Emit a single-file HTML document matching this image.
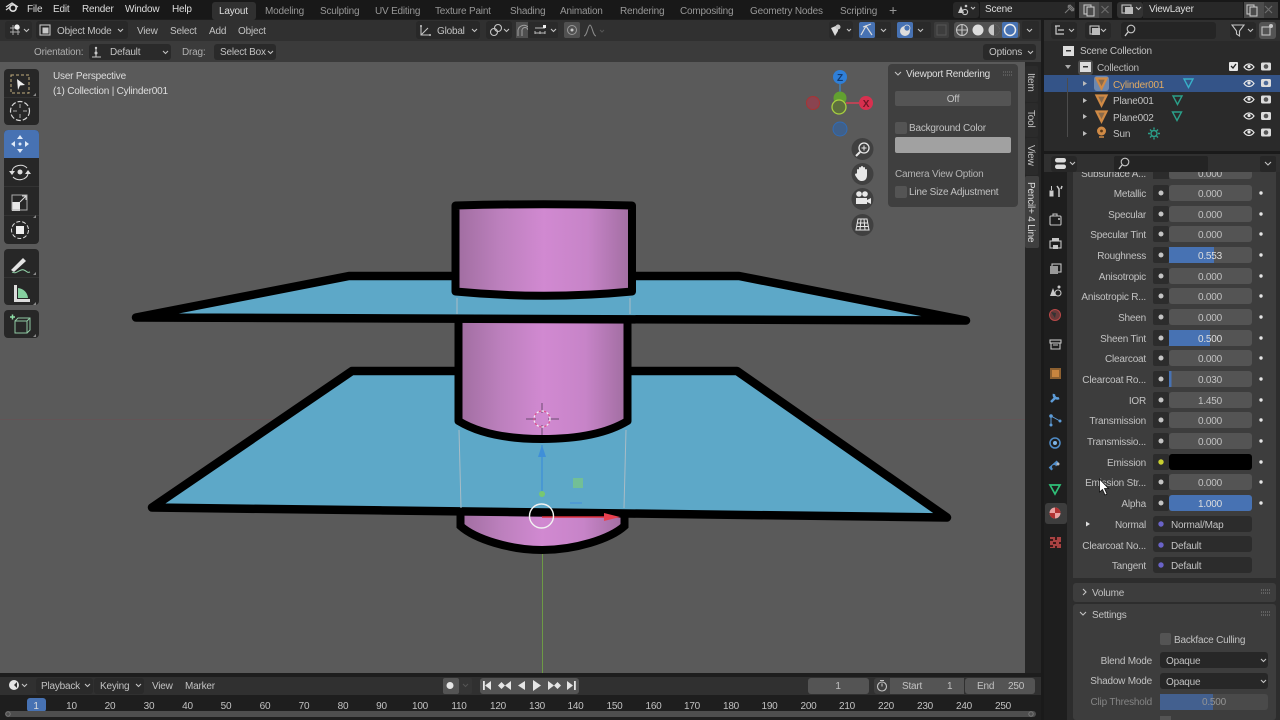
<!DOCTYPE html>
<html lang="en"><head><meta charset="utf-8"><title>Blender</title>
<style>
html,body{margin:0;padding:0;background:#1d1d1d;width:1280px;height:720px;overflow:hidden}
svg{display:block;filter:blur(.35px)}
text{font-family:"Liberation Sans",sans-serif;font-size:10px;letter-spacing:-.2px;fill:#c2c2c2}
.l{text-anchor:end}
.c{text-anchor:middle}
.d{fill:#979797}
.w{fill:#dedede}
.i{fill:none;stroke:#c4c4c4;stroke-width:1.1}
.f{fill:#c8c8c8}
</style></head><body>
<svg width="1280" height="720" viewBox="0 0 1280 720" xmlns="http://www.w3.org/2000/svg">
<defs>
<linearGradient id="p1" x1="0" x2="1" y1="0" y2="0"><stop offset="0" stop-color="#a06da0"/><stop offset=".25" stop-color="#bc80bd"/><stop offset=".5" stop-color="#d189d1"/><stop offset=".75" stop-color="#c784c8"/><stop offset="1" stop-color="#a06da0"/></linearGradient>
</defs>
<rect width="1280" height="720" fill="#1d1d1d"/>

<!-- top bar -->
<rect width="1280" height="19" fill="#181818"/>
<rect x="212" y="2" width="44" height="18" rx="3" fill="#303030"/>
<g transform="translate(12,8)"><circle cx="1" cy="0" r="3.2" fill="none" stroke="#ddd" stroke-width="1.6"/><path d="M-6,-1L0,-5L6,-1M-6,2L-2,-1" fill="none" stroke="#ddd" stroke-width="1.3"/></g>
<text x="27" y="12" class="w">File</text><text x="53" y="12" class="w">Edit</text><text x="82" y="12" class="w">Render</text><text x="125" y="12" class="w">Window</text><text x="172" y="12" class="w">Help</text>
<text x="219" y="14" class="w">Layout</text>
<text x="265" y="14" class="d">Modeling</text><text x="320" y="14" class="d">Sculpting</text><text x="375" y="14" class="d">UV Editing</text><text x="435" y="14" class="d">Texture Paint</text><text x="510" y="14" class="d">Shading</text><text x="560" y="14" class="d">Animation</text><text x="620" y="14" class="d">Rendering</text><text x="680" y="14" class="d">Compositing</text><text x="750" y="14" class="d">Geometry Nodes</text><text x="840" y="14" class="d">Scripting</text>
<text x="889" y="15" style="font-size:14px" class="d">+</text>
<rect x="953" y="2" width="26" height="16" rx="3" fill="#282828"/>
<path d="M958,13L961,6L964,13Z" fill="#ccc"/><circle cx="965" cy="12" r="2.6" class="i"/><circle cx="966" cy="6" r="1.3" class="f"/><path d="M971,7l2,2l2,-2" class="i"/>
<rect x="980" y="2" width="95" height="16" fill="#282828"/>
<text x="985" y="12" class="w">Scene</text>
<path d="M1065,13l4,-4m-1,-4l6,6m-4,-6l-2,2l4,4l2,-2z" style="fill:none;stroke:#7a7a7a;stroke-width:1.1"/>
<rect x="1079" y="2" width="20" height="16" fill="#4c4c4c"/><rect x="1084" y="5" width="7" height="9" class="i"/><rect x="1087" y="7" width="7" height="9" fill="#4c4c4c" stroke="#cfcfcf"/>
<rect x="1099" y="2" width="13" height="16" fill="#3a3a3a"/><path d="M1101.5,6l7,7m0,-7l-7,7" fill="none" stroke="#6d6d6d" stroke-width="1.2"/>
<rect x="1117" y="2" width="26" height="16" rx="3" fill="#333"/><rect x="1122" y="5" width="9" height="8" class="i"/><rect x="1125" y="7" width="8" height="7" fill="#bbb"/><path d="M1136,7l2.500,2.500l2.500,-2.500" class="i"/>
<rect x="1143" y="2" width="100" height="16" fill="#282828"/>
<text x="1149" y="12" class="w">ViewLayer</text>
<rect x="1244" y="2" width="20" height="16" fill="#4c4c4c"/><rect x="1247" y="5" width="7" height="9" class="i"/><rect x="1250" y="7" width="7" height="9" fill="#4c4c4c" stroke="#cfcfcf"/>
<rect x="1264" y="2" width="14" height="16" fill="#3a3a3a"/><path d="M1265,6l7,7m0,-7l-7,7" fill="none" stroke="#6d6d6d" stroke-width="1.2"/>

<!-- 3D view header -->
<rect x="0" y="20" width="1041" height="21" fill="#303030"/>
<rect x="0" y="41" width="1041" height="21" fill="#3b3b3b"/>
<rect x="5" y="21" width="27" height="18" rx="3" fill="#2a2a2a"/>
<path d="M10,32h10M10,28h10M13,25v10M18,25v10" fill="none" stroke="#aaa"/><circle cx="17" cy="27" r="2.600" fill="#eee"/><path d="M24,29l2.500,2.500l2.500,-2.500" class="i"/>
<rect x="36" y="21" width="92" height="18" rx="3" fill="#282828"/>
<rect x="40" y="25" width="10" height="10" class="i"/><rect x="42.500" y="27.500" width="6" height="6" class="f"/>
<text x="57" y="34">Object Mode</text><path d="M118,29l2.500,2.500l2.500,-2.500" class="i"/>
<text x="137" y="34">View</text><text x="170" y="34">Select</text><text x="209" y="34">Add</text><text x="238" y="34">Object</text>
<rect x="416" y="21" width="64" height="18" rx="3" fill="#282828"/>
<path d="M421,26v9h9M421,35l7,-7" class="i"/><circle cx="421" cy="26" r="1" class="f"/><circle cx="430" cy="35" r="1" class="f"/>
<text x="437" y="34">Global</text><path d="M472,29l2.500,2.500l2.500,-2.500" class="i"/>
<rect x="486" y="21" width="26" height="18" rx="3" fill="#282828"/>
<circle cx="494" cy="32" r="3.500" class="i"/><circle cx="498" cy="28" r="3.500" class="i"/><path d="M504,29l2.500,2.500l2.500,-2.500" class="i"/>
<rect x="516" y="22" width="12" height="16" fill="#505050"/>
<path d="M518,36v-6a6,6 0 0 1 10,-3M522,36v-5a3,3 0 0 1 6,-1" fill="none" stroke="#9f9f9f"/>
<rect x="528" y="22" width="30" height="16" rx="2" fill="#2a2a2a"/>
<path d="M535,28h10M535,34v-3M540,34v-3M545,34v-3M535,33h10" fill="none" stroke="#bbb"/><rect x="543" y="25" width="3" height="3" fill="#eee"/><path d="M551,29l2.500,2.500l2.500,-2.500" class="i"/>
<rect x="564" y="22" width="16" height="16" rx="2" fill="#505050"/><circle cx="572" cy="30" r="4.500" style="fill:none;stroke:#999"/><circle cx="572" cy="30" r="1.500" class="f"/>
<path d="M584,36c3,0 4,-11 6,-11s3,11 6,11" fill="none" stroke="#8c8c8c"/><path d="M600,30l2,2l2,-2" fill="none" stroke="#555"/>
<rect x="829" y="21" width="24" height="18" rx="3" fill="#2a2a2a"/><path d="M831,28l7,-3v6l-3,5z" fill="#ddd"/><circle cx="838" cy="27" r="2.500" class="f"/><path d="M847,29l2,2l2,-2" class="i"/>
<rect x="859" y="22" width="16" height="16" rx="2" fill="#4772b3"/><path d="M861,35l5,-9l6,9M863,27l8,-3" fill="none" stroke="#ddd" stroke-width="1.200"/>
<rect x="875" y="22" width="16" height="16" rx="2" fill="#2a2a2a"/><path d="M881,29l2.500,2.500l2.500,-2.500" class="i"/>
<rect x="897" y="22" width="16" height="16" rx="2" fill="#4772b3"/><circle cx="905" cy="31" r="5" fill="#ddd"/><circle cx="907" cy="28" r="3" fill="#4772b3" stroke="#ddd" stroke-width=".8"/>
<rect x="913" y="22" width="18" height="16" rx="2" fill="#2a2a2a"/><path d="M918,29l2.500,2.500l2.500,-2.500" class="i"/>
<rect x="934" y="22" width="15" height="16" rx="2" fill="#3d3d3d"/><rect x="937" y="25" width="9" height="10" fill="none" stroke="#555"/>
<rect x="954" y="22" width="66" height="16" rx="3" fill="#515151"/>
<circle cx="962" cy="30" r="5.500" class="i"/><path d="M957,30h10M962,25v10" class="i"/>
<circle cx="978" cy="30" r="5.500" fill="#dcdcdc"/>
<circle cx="994" cy="30" r="5.500" class="f"/><path d="M994,24.500a5.500,5.500 0 0 1 0,11z" fill="#515151"/>
<rect x="1002" y="22" width="16" height="16" rx="2" fill="#4772b3"/><circle cx="1010" cy="30" r="5.500" fill="none" stroke="#eee" stroke-width="1.500"/>
<rect x="1022" y="21" width="17" height="18" rx="2" fill="#2a2a2a"/><path d="M1027,29l2.500,2.500l2.500,-2.500" class="i"/>

<!-- tool header -->
<text x="34" y="55" style="fill:#aeaeae">Orientation:</text>
<rect x="89" y="44" width="82" height="16" rx="3" fill="#2a2a2a"/>
<path d="M96,49v8M92,57h9" class="i"/><circle cx="96" cy="48" r="1.200" class="f"/><circle cx="96" cy="53" r="1.500" class="f"/>
<text x="110" y="55">Default</text><path d="M163,51l2.500,2.500l2.500,-2.500" class="i"/>
<text x="182" y="55" style="fill:#aeaeae">Drag:</text>
<rect x="214" y="44" width="62" height="16" rx="3" fill="#2a2a2a"/>
<text x="220" y="55">Select Box</text><path d="M268,51l2.500,2.500l2.500,-2.500" class="i"/>
<rect x="983" y="44" width="53" height="16" rx="3" fill="#2a2a2a"/>
<text x="989" y="55">Options</text><path d="M1028,51l2.500,2.500l2.500,-2.500" class="i"/>

<!-- viewport -->
<rect x="0" y="62" width="1025" height="611" fill="#5a5a5a"/>
<rect x="1025" y="62" width="16" height="611" fill="#262626"/>
<path d="M0,419.500H1025" stroke="#6b5053" stroke-width="1" opacity=".55"/>

<!-- green axis -->
<path d="M542.500,540V673" stroke="#6d9a45"/>
<!-- lower cylinder -->
<path d="M460.500,510V526C475,539 510,550 542,550C575,550 610,539 624.500,526V510Z" fill="url(#p1)"/>
<path d="M460.500,510V526C475,539 510,550 542,550C575,550 610,539 624.500,526V510" fill="none" stroke="#000" stroke-width="8"/>
<!-- lower plane -->
<path d="M152,507.500L352,371H737L947,517.500Z" fill="#5da8c8" stroke="#000" stroke-width="8.500" stroke-linejoin="round"/>
<!-- wire lines -->
<path d="M459,430L461,508M626,430L624,508" stroke="#a9bcc6" stroke-width="1" fill="none"/>
<!-- mid cylinder -->
<path d="M458.500,318V421C480,434 510,439 542,439C575,439 606,434 627.500,421V318Z" fill="url(#p1)"/>
<path d="M458.500,318V421C480,434 510,439 542,439C575,439 606,434 627.500,421V318" fill="none" stroke="#000" stroke-width="8" stroke-linejoin="round"/>
<!-- upper plane -->
<path d="M136,317.500L349,276H739L966,320.500Z" fill="#5da8c8" stroke="#000" stroke-width="8.500" stroke-linejoin="round"/>
<path d="M457,298V314M630,298V314" stroke="#a9bcc6" stroke-width="1"/>
<!-- top cylinder -->
<path d="M455.500,205.500Q544,203 632,205.500V291.500Q544,300 455.500,291.500Z" fill="url(#p1)" stroke="#000" stroke-width="8" stroke-linejoin="round"/>

<!-- object gizmo -->
<path d="M542,445V495" stroke="#3f8fd8" stroke-width="1.300"/>
<path d="M542,445L546,457H538Z" fill="#3f8fd8"/>
<circle cx="542" cy="494" r="3" fill="#78c870"/>
<rect x="573" y="478" width="10" height="10" fill="#72bf96"/>
<rect x="570" y="502" width="12" height="2" fill="#4f9ad2"/>
<path d="M542,517H605" stroke="#e0303f" stroke-width="1.600"/>
<path d="M604,513L620,517L604,521Z" fill="#e8404f"/>
<circle cx="541.500" cy="516" r="12" fill="none" stroke="#f2f2f2" stroke-width="1.400"/>
<!-- 3D cursor -->
<path d="M526,419H536M548,419H559M542,403V413M542,425V435" stroke="#6b4a70" stroke-width="1"/>
<circle cx="542" cy="419" r="8" fill="none" stroke="#f5f0f5" stroke-width="1.200" stroke-dasharray="3 2.300"/>
<circle cx="542" cy="419" r="8" fill="none" stroke="#e0508a" stroke-width="1.200" stroke-dasharray="2.300 3" stroke-dashoffset="3"/>

<!-- overlay text -->
<text x="53" y="79" class="w">User Perspective</text>
<text x="53" y="94" class="w">(1) Collection | Cylinder001</text>

<!-- left toolbar -->
<rect x="4" y="69" width="35" height="56" rx="4" fill="#272727"/>
<path d="M4,97.500H39" stroke="#333"/>
<rect x="11" y="75" width="18" height="18" fill="none" stroke="#c2ad7e" stroke-dasharray="3 2"/>
<path d="M17,79L25,85L20,85.500L18,90Z" fill="#f0f0f0"/>
<circle cx="20" cy="111" r="9.500" fill="none" stroke="#d8d8d8" stroke-width="1.200" stroke-dasharray="5 2"/>
<path d="M20,104v4M20,114v4M13,111h4M23,111h4" stroke="#aaa"/>
<rect x="4" y="130" width="35" height="114" rx="4" fill="#272727"/>
<path d="M4,134a4,4 0 0 1 4,-4h27a4,4 0 0 1 4,4v24H4z" fill="#4772b3"/>
<path d="M4,186.500H39M4,215.500H39" stroke="#333"/>
<path d="M20,135l3,4h-6zM20,153l3,-4h-6zM11,144l4,-3v6zM29,144l-4,-3v6z" fill="#dfe9f7"/><circle cx="20" cy="144" r="1.500" fill="#dfe9f7"/>
<path d="M12,171a8.500,7 0 0 1 15,-3M28,174a8.500,7 0 0 1 -15,3" fill="none" stroke="#ddd"/><path d="M12,175l-3,-4h6zM28,170l3,4h-6z" fill="#ddd"/><circle cx="20" cy="172" r="2.500" fill="#ddd"/>
<rect x="12" y="202" width="8" height="9" fill="#e6e6e6"/><rect x="12" y="195" width="15" height="15" fill="none" stroke="#aaa"/><path d="M20,202l6,-6M22,196h4v4" fill="none" stroke="#ddd"/>
<circle cx="20" cy="230" r="8.500" fill="none" stroke="#ddd" stroke-dasharray="4 2"/><rect x="16" y="226" width="8" height="8" fill="#eee"/>
<rect x="4" y="249" width="35" height="56" rx="4" fill="#272727"/>
<path d="M4,277.500H39" stroke="#333"/>
<path d="M11,270L23,258L26,261L14,272Z" fill="#e4e4e4"/><path d="M12,272c5,3 8,-4 12,-2s3,3 6,2" fill="none" stroke="#8fd0a5"/>
<path d="M14,285V302H30V299H17V285Z" fill="#ddd"/><path d="M18,288a11,11 0 0 1 10,10H18Z" fill="#86d0a0"/>
<rect x="4" y="310" width="35" height="28" rx="4" fill="#272727"/>
<path d="M10,317h5M12.500,314.500v5" stroke="#8fe0a8" stroke-width="1.500"/>
<path d="M15,321h12v12H15zM15,321l3,-3h12v12l-3,3M27,321l3,-3" fill="none" stroke="#8fc9a3"/>
<path d="M36,93l-3,3h3zM36,215l-3,3h3zM36,272l-3,3h3zM36,302l-3,3h3zM36,334l-3,3h3z" fill="#8a8a8a"/>

<!-- nav gizmo -->
<circle cx="840" cy="77" r="7" fill="#2f7fd8"/><text x="840" y="81" class="c" style="font-size:10px;font-weight:bold;fill:#123a70">Z</text>
<path d="M840,84V95" stroke="#3f7fb8" stroke-width="1.500"/>
<circle cx="840" cy="129" r="7" fill="#3f608a" stroke="#2f6cb8"/>
<circle cx="813" cy="103" r="6.500" fill="#8a4450" stroke="#a33"/>
<path d="M846,103H860" stroke="#d84055" stroke-width="1.500"/>
<circle cx="866" cy="103" r="7" fill="#d8304f"/><text x="866" y="107" class="c" style="font-size:10px;font-weight:bold;fill:#701525">X</text>
<circle cx="840" cy="98" r="6.500" fill="#62a030"/>
<circle cx="839" cy="107" r="7" fill="#5d6f3d" stroke="#a8d040" stroke-width="1.300"/>

<circle cx="862.500" cy="149" r="11" fill="#404040"/>
<circle cx="864" cy="148" r="5" fill="none" stroke="#e8e8e8" stroke-width="1.300"/><path d="M860,152L856,156" stroke="#e8e8e8" stroke-width="2"/><path d="M861.500,148h5M864,145.500v5" stroke="#e8e8e8"/>
<circle cx="862.500" cy="174" r="11" fill="#404040"/>
<path d="M857,174v-4a1,1 0 0 1 2,0v-2a1,1 0 0 1 2,0v-1a1,1 0 0 1 2,0v1a1,1 0 0 1 2,0v2a1,1 0 0 1 2,0v5c0,4 -2,6 -5,6s-4,-1 -7,-6c0,-2 2,-2 2,-1z" fill="#e8e8e8"/>
<circle cx="862.500" cy="199" r="11" fill="#404040"/>
<circle cx="859" cy="194" r="2.800" fill="#e8e8e8"/><circle cx="865" cy="194" r="2.800" fill="#e8e8e8"/><rect x="856" y="198" width="11" height="6" fill="#e8e8e8"/><path d="M867,200l4,-2v6l-4,-2z" fill="#e8e8e8"/>
<circle cx="862.500" cy="225" r="11" fill="#404040"/>
<path d="M858,219h9l2,11h-13zM861,219l-1,11M864,219l1,11M857,223h11M856.500,226.500h12" fill="none" stroke="#e8e8e8"/>

<!-- N panel -->
<rect x="888" y="64" width="130" height="143" rx="4" fill="#3f3f3f"/>
<path d="M895,72l3,3l3,-3" class="i"/>
<text x="906" y="77" class="w">Viewport Rendering</text>
<path d="M1003,72h10M1003,75h10" stroke="#777" stroke-dasharray="1 1"/>
<rect x="895" y="91" width="116" height="15" rx="2" fill="#545454"/>
<text x="953" y="102" class="c">Off</text>
<rect x="895" y="122" width="12" height="12" rx="2" fill="#545454"/>
<text x="909" y="131">Background Color</text>
<rect x="895" y="137" width="116" height="16" rx="2" fill="#a1a1a1"/>
<text x="895" y="177" style="fill:#b4b4b4">Camera View Option</text>
<rect x="895" y="186" width="12" height="12" rx="2" fill="#545454"/>
<text x="909" y="195">Line Size Adjustment</text>

<!-- side tabs -->
<rect x="1025" y="66" width="13" height="36" rx="2" fill="#2b2b2b"/>
<rect x="1025" y="103" width="13" height="34" rx="2" fill="#2b2b2b"/>
<rect x="1025" y="138" width="13" height="37" rx="2" fill="#2b2b2b"/>
<rect x="1025" y="176" width="14" height="72" rx="2" fill="#3f3f3f"/>
<text transform="translate(1028,73) rotate(90)">Item</text>
<text transform="translate(1028,110) rotate(90)">Tool</text>
<text transform="translate(1028,145) rotate(90)">View</text>
<text transform="translate(1028,182) rotate(90)" class="w">Pencil+ 4 Line</text>

<!-- right column separators -->
<rect x="1041" y="19" width="239" height="701" fill="#1a1a1a"/>

<!-- outliner -->
<rect x="1044" y="20" width="236" height="131" fill="#2a2a2a"/>
<rect x="1044" y="20" width="236" height="21" fill="#303030"/>
<rect x="1051" y="22" width="26" height="17" rx="3" fill="#282828"/><path d="M1055,26h5M1058,30h6M1058,34h6M1056,26v8h2" fill="none" stroke="#ccc" stroke-width="1.200"/><path d="M1069,29l2.500,2.500l2.500,-2.500" class="i"/>
<rect x="1085" y="22" width="26" height="17" rx="3" fill="#282828"/><rect x="1090" y="26" width="9" height="8" class="i"/><rect x="1092" y="28" width="8" height="7" fill="#bbb"/><path d="M1101,29l2.500,2.500l2.500,-2.500" class="i"/>
<rect x="1121" y="22" width="95" height="17" rx="3" fill="#252525"/><circle cx="1131" cy="29" r="3.800" class="i"/><path d="M1128,32l-3,4" stroke="#ccc" stroke-width="1.300"/>
<rect x="1230" y="22" width="26" height="17" rx="3" fill="#282828"/><path d="M1232,25h12l-4.500,6v5l-3,-2v-3z" class="i"/><path d="M1248,29l2.500,2.500l2.500,-2.500" class="i"/>
<rect x="1259" y="22" width="17" height="17" rx="3" fill="#545454"/><rect x="1262" y="27" width="8" height="8" class="i"/><circle cx="1271" cy="26" r="2" class="f"/>

<rect x="1063" y="46" width="11" height="3" fill="#ddd"/><rect x="1063" y="49" width="11" height="7" fill="#ddd"/><rect x="1066" y="50" width="5" height="1.500" fill="#333"/>
<text x="1080" y="54">Scene Collection</text>
<path d="M1065,65l3,4l3,-4z" fill="#aaa"/>
<rect x="1078" y="60" width="15" height="15" rx="3" fill="#4e4e4e"/>
<rect x="1080" y="62" width="11" height="3" fill="#ddd"/><rect x="1080" y="65" width="11" height="7" fill="#ddd"/><rect x="1083" y="66" width="5" height="1.500" fill="#333"/>
<text x="1097" y="71" style="fill:#b8b8b8">Collection</text>
<rect x="1229" y="62" width="9" height="9" rx="1" fill="#e6e6e6"/><path d="M1231,66l2,2l3,-4" fill="none" stroke="#222" stroke-width="1.300"/>

<rect x="1044" y="75" width="236" height="17" fill="#345488"/>
<path d="M1067.500,78V137" stroke="#4c4c4c"/>
<rect x="1094" y="76" width="15" height="15" rx="3" fill="#6e88ae"/>
<path d="M1083,81l4,2.500l-4,2.500zM1083,98l4,2.500l-4,2.500zM1083,114l4,2.500l-4,2.500zM1083,131l4,2.500l-4,2.500z" fill="#bbb"/>
<g fill="#8a6a4a" stroke="#d08a45" stroke-width="2.200"><path d="M1096.500,78.500h10l-5,10z"/><path d="M1096.500,95.500h10l-5,10z"/><path d="M1096.500,111.500h10l-5,10z"/></g>
<circle cx="1101.500" cy="131" r="4.500" fill="#d08a45"/><path d="M1099,137h5" stroke="#d08a45" stroke-width="1.500"/><circle cx="1101.500" cy="131" r="1.400" fill="#5a3a1a"/>
<text x="1113" y="88" style="fill:#e3ab62">Cylinder001</text>
<text x="1113" y="104">Plane001</text>
<text x="1113" y="121">Plane002</text>
<text x="1113" y="137">Sun</text>
<g fill="none" stroke-width="1.400"><path d="M1184,79h9l-4.500,8.500z" stroke="#38b0c8"/><path d="M1173,96h9l-4.500,8.500z" stroke="#2ba08a"/><path d="M1172.500,112h9l-4.500,8.500z" stroke="#2ba08a"/><circle cx="1154" cy="133.500" r="3" stroke="#2ba08a"/><path d="M1154,127.500v2M1154,137.500v2M1148,133.500h2M1158,133.500h2M1150,129.500l1.500,1.500M1158,129.500l-1.500,1.500M1150,137.500l1.500,-1.500M1158,137.500l-1.500,-1.500" stroke="#2ba08a"/></g>
<path d="M1244,67c3,-4 7,-4 10,0c-3,4 -7,4 -10,0z" fill="none" stroke="#e6e6e6" stroke-width="1.200"/><circle cx="1249" cy="66.500" r="1.600" fill="#e6e6e6"/>
<rect x="1261" y="62.500" width="10" height="8" rx="1.500" fill="#dcdcdc"/><circle cx="1266" cy="66.500" r="2.300" fill="#555"/>
<path d="M1244,83.500c3,-4 7,-4 10,0c-3,4 -7,4 -10,0z" fill="none" stroke="#e6e6e6" stroke-width="1.200"/><circle cx="1249" cy="83" r="1.600" fill="#e6e6e6"/>
<rect x="1261" y="79" width="10" height="8" rx="1.500" fill="#dcdcdc"/><circle cx="1266" cy="83" r="2.300" fill="#4d6a98"/>
<path d="M1244,99.500c3,-4 7,-4 10,0c-3,4 -7,4 -10,0z" fill="none" stroke="#e6e6e6" stroke-width="1.200"/><circle cx="1249" cy="99" r="1.600" fill="#e6e6e6"/>
<rect x="1261" y="95.500" width="10" height="8" rx="1.500" fill="#dcdcdc"/><circle cx="1266" cy="99.500" r="2.300" fill="#555"/>
<path d="M1244,116c3,-4 7,-4 10,0c-3,4 -7,4 -10,0z" fill="none" stroke="#e6e6e6" stroke-width="1.200"/><circle cx="1249" cy="115.500" r="1.600" fill="#e6e6e6"/>
<rect x="1261" y="112" width="10" height="8" rx="1.500" fill="#dcdcdc"/><circle cx="1266" cy="116" r="2.300" fill="#555"/>
<path d="M1244,132.500c3,-4 7,-4 10,0c-3,4 -7,4 -10,0z" fill="none" stroke="#e6e6e6" stroke-width="1.200"/><circle cx="1249" cy="132" r="1.600" fill="#e6e6e6"/>
<rect x="1261" y="128.500" width="10" height="8" rx="1.500" fill="#dcdcdc"/><circle cx="1266" cy="132.500" r="2.300" fill="#555"/>

<!-- properties -->
<rect x="1044" y="154" width="236" height="566" fill="#2d2d2d"/>
<rect x="1044" y="172" width="23" height="548" fill="#1e1e1e"/>
<rect x="1073" y="172" width="203" height="406" fill="#3d3d3d"/>

<!-- props rows -->
<text class="l" x="1146" y="177">Subsurface A...</text>
<rect x="1153" y="163" width="16" height="16" fill="#2c2c2c"/>
<rect x="1169" y="163" width="83" height="16" rx="3" fill="#545454"/>
<text class="c" x="1210" y="177">0.000</text>
<rect x="1044" y="154" width="236" height="18" fill="#303030"/>
<rect x="1051" y="156" width="26" height="16" rx="3" fill="#272727"/>
<rect x="1055" y="158" width="11" height="4.500" rx="2.200" fill="#ddd"/><rect x="1055" y="164.500" width="11" height="4.500" rx="2.200" fill="#ddd"/><path d="M1070,162l2.500,2.500l2.500,-2.500" class="i"/>
<rect x="1114" y="156" width="94" height="16" rx="2" fill="#242424"/><circle cx="1125" cy="162" r="3.800" class="i"/><path d="M1122,165l-3,4" stroke="#ccc" stroke-width="1.300"/>
<rect x="1260" y="156" width="16" height="16" rx="2" fill="#272727"/><path d="M1265,162l3,3l3,-3" class="i"/>

<g fill="#2c2c2c">
<rect x="1153" y="185" width="16" height="16" rx="2"/><rect x="1153" y="206" width="16" height="16" rx="2"/><rect x="1153" y="226" width="16" height="16" rx="2"/><rect x="1153" y="247" width="16" height="16" rx="2"/><rect x="1153" y="268" width="16" height="16" rx="2"/><rect x="1153" y="288" width="16" height="16" rx="2"/><rect x="1153" y="309" width="16" height="16" rx="2"/><rect x="1153" y="330" width="16" height="16" rx="2"/><rect x="1153" y="350" width="16" height="16" rx="2"/><rect x="1153" y="371" width="16" height="16" rx="2"/><rect x="1153" y="392" width="16" height="16" rx="2"/><rect x="1153" y="412" width="16" height="16" rx="2"/><rect x="1153" y="433" width="16" height="16" rx="2"/><rect x="1153" y="454" width="16" height="16" rx="2"/><rect x="1153" y="474" width="16" height="16" rx="2"/><rect x="1153" y="495" width="16" height="16" rx="2"/>
<rect x="1153" y="516" width="99" height="16" rx="3"/><rect x="1153" y="536" width="99" height="16" rx="3"/><rect x="1153" y="557" width="99" height="16" rx="3"/>
</g>
<g fill="#545454">
<rect x="1169" y="185" width="83" height="16" rx="3"/><rect x="1169" y="206" width="83" height="16" rx="3"/><rect x="1169" y="226" width="83" height="16" rx="3"/><rect x="1169" y="247" width="83" height="16" rx="3"/><rect x="1169" y="268" width="83" height="16" rx="3"/><rect x="1169" y="288" width="83" height="16" rx="3"/><rect x="1169" y="309" width="83" height="16" rx="3"/><rect x="1169" y="330" width="83" height="16" rx="3"/><rect x="1169" y="350" width="83" height="16" rx="3"/><rect x="1169" y="371" width="83" height="16" rx="3"/><rect x="1169" y="392" width="83" height="16" rx="3"/><rect x="1169" y="412" width="83" height="16" rx="3"/><rect x="1169" y="433" width="83" height="16" rx="3"/><rect x="1169" y="474" width="83" height="16" rx="3"/>
</g>
<rect x="1169" y="247" width="45" height="16" fill="#4772b3"/>
<rect x="1169" y="330" width="41" height="16" fill="#4772b3"/>
<rect x="1169" y="371" width="2.500" height="16" fill="#4772b3"/>
<rect x="1169" y="454" width="83" height="16" rx="3" fill="#000"/>
<rect x="1169" y="495" width="83" height="16" rx="3" fill="#4772b3"/>
<g fill="#c4c4c4">
<circle cx="1161" cy="193" r="2.500"/><circle cx="1161" cy="214" r="2.500"/><circle cx="1161" cy="234" r="2.500"/><circle cx="1161" cy="255" r="2.500"/><circle cx="1161" cy="276" r="2.500"/><circle cx="1161" cy="296" r="2.500"/><circle cx="1161" cy="317" r="2.500"/><circle cx="1161" cy="338" r="2.500"/><circle cx="1161" cy="358" r="2.500"/><circle cx="1161" cy="379" r="2.500"/><circle cx="1161" cy="400" r="2.500"/><circle cx="1161" cy="420" r="2.500"/><circle cx="1161" cy="441" r="2.500"/><circle cx="1161" cy="482" r="2.500"/><circle cx="1161" cy="503" r="2.500"/>
</g>
<circle cx="1161" cy="462" r="2.700" fill="#c8cf30"/>
<g fill="#6a63c8"><circle cx="1161" cy="524" r="2.700"/><circle cx="1161" cy="545" r="2.700"/><circle cx="1161" cy="565" r="2.700"/></g>
<g fill="#e6e6e6">
<circle cx="1261" cy="193" r="1.700"/><circle cx="1261" cy="214" r="1.700"/><circle cx="1261" cy="234" r="1.700"/><circle cx="1261" cy="255" r="1.700"/><circle cx="1261" cy="276" r="1.700"/><circle cx="1261" cy="296" r="1.700"/><circle cx="1261" cy="317" r="1.700"/><circle cx="1261" cy="338" r="1.700"/><circle cx="1261" cy="358" r="1.700"/><circle cx="1261" cy="379" r="1.700"/><circle cx="1261" cy="400" r="1.700"/><circle cx="1261" cy="420" r="1.700"/><circle cx="1261" cy="441" r="1.700"/><circle cx="1261" cy="462" r="1.700"/><circle cx="1261" cy="482" r="1.700"/><circle cx="1261" cy="503" r="1.700"/>
</g>
<text class="l" x="1146" y="197">Metallic</text><text class="c" x="1210" y="197">0.000</text>
<text class="l" x="1146" y="218">Specular</text><text class="c" x="1210" y="218">0.000</text>
<text class="l" x="1146" y="238">Specular Tint</text><text class="c" x="1210" y="238">0.000</text>
<text class="l" x="1146" y="259">Roughness</text><text class="c w" x="1210" y="259">0.553</text>
<text class="l" x="1146" y="280">Anisotropic</text><text class="c" x="1210" y="280">0.000</text>
<text class="l" x="1146" y="300">Anisotropic R...</text><text class="c" x="1210" y="300">0.000</text>
<text class="l" x="1146" y="321">Sheen</text><text class="c" x="1210" y="321">0.000</text>
<text class="l" x="1146" y="342">Sheen Tint</text><text class="c w" x="1210" y="342">0.500</text>
<text class="l" x="1146" y="362">Clearcoat</text><text class="c" x="1210" y="362">0.000</text>
<text class="l" x="1146" y="383">Clearcoat Ro...</text><text class="c" x="1210" y="383">0.030</text>
<text class="l" x="1146" y="404">IOR</text><text class="c" x="1210" y="404">1.450</text>
<text class="l" x="1146" y="424">Transmission</text><text class="c" x="1210" y="424">0.000</text>
<text class="l" x="1146" y="445">Transmissio...</text><text class="c" x="1210" y="445">0.000</text>
<text class="l" x="1146" y="466">Emission</text>
<text class="l" x="1146" y="486">Emission Str...</text><text class="c" x="1210" y="486">0.000</text>
<text class="l" x="1146" y="507">Alpha</text><text class="c w" x="1210" y="507">1.000</text>
<path d="M1086,521.500l4,2.500l-4,2.500z" fill="#ddd"/>
<text class="l" x="1146" y="528">Normal</text><text x="1171" y="528">Normal/Map</text>
<text class="l" x="1146" y="549">Clearcoat No...</text><text x="1171" y="549">Default</text>
<text class="l" x="1146" y="569">Tangent</text><text x="1171" y="569">Default</text>

<!-- Volume/Settings -->
<rect x="1073" y="583" width="203" height="19" rx="3" fill="#3d3d3d"/>
<path d="M1083,589l3,3l-3,3" class="i"/>
<text x="1092" y="596">Volume</text>
<path d="M1261,590h10M1261,593h10" stroke="#888" stroke-dasharray="1 1"/>
<rect x="1073" y="604" width="203" height="116" rx="3" fill="#3d3d3d"/>
<path d="M1080,612l3,3l3,-3" class="i"/>
<text x="1092" y="618">Settings</text>
<path d="M1261,612h10M1261,615h10" stroke="#888" stroke-dasharray="1 1"/>
<rect x="1160" y="633" width="11" height="12" rx="2" fill="#545454"/>
<text x="1174" y="643">Backface Culling</text>
<text class="l" x="1152" y="664">Blend Mode</text>
<rect x="1160" y="652" width="108" height="16" rx="3" fill="#272727"/><text x="1166" y="664">Opaque</text><path d="M1261,659l2.500,2.500l2.500,-2.500" class="i"/>
<text class="l" x="1152" y="684">Shadow Mode</text>
<rect x="1160" y="673" width="108" height="16" rx="3" fill="#272727"/><text x="1166" y="685">Opaque</text><path d="M1261,680l2.500,2.500l2.500,-2.500" class="i"/>
<text class="l" x="1152" y="705" style="fill:#858585">Clip Threshold</text>
<rect x="1160" y="694" width="108" height="16" rx="3" fill="#4a4a4a"/>
<rect x="1160" y="694" width="53" height="16" fill="#43608f"/>
<text class="c" x="1214" y="705" style="fill:#939393">0.500</text>
<rect x="1160" y="716" width="11" height="4" fill="#545454"/>

<!-- Prop tabs -->
<path d="M1050,196v-5h3v5zM1051.500,190v-4" stroke="#ccc" fill="#ccc"/><path d="M1057,186l2,3v8M1062,186l-1,3" fill="none" stroke="#ccc" stroke-width="1.500"/>
<rect x="1050" y="216" width="11" height="9" rx="1" class="i"/><path d="M1053,216v-2h4v2" class="i"/><circle cx="1059" cy="219" r="1" class="f"/>
<rect x="1050" y="241" width="11" height="7" class="i"/><rect x="1052" y="238" width="7" height="3" class="f"/><rect x="1053" y="245" width="5" height="4" class="f"/>
<rect x="1052" y="264" width="9" height="8" class="i"/><rect x="1050" y="266" width="8" height="8" fill="#999"/>
<path d="M1050,296L1053,288L1056,296Z" class="f"/><circle cx="1058" cy="293" r="3" class="i"/><circle cx="1059" cy="287" r="1.500" class="f"/>
<circle cx="1055" cy="315" r="5.500" fill="#6a3a3a" stroke="#b84848"/><path d="M1051,312l5,1l-1,5z" fill="#333"/>
<rect x="1050" y="340" width="11" height="3" class="i"/><path d="M1051,343v6h9v-6M1053,345h5" class="i"/>
<rect x="1050" y="368" width="11" height="11" fill="#8d6030"/><rect x="1052" y="370" width="7" height="7" fill="#c8853f"/>
<path d="M1051,402l5,-5M1054,394a3.500,3.500 0 0 0 5,4" fill="none" stroke="#5d9cd8" stroke-width="2.500"/>
<circle cx="1051" cy="416" r="1.800" fill="#5d9cd8"/><circle cx="1051" cy="425" r="1.500" fill="#5d9cd8"/><circle cx="1060" cy="421" r="1.500" fill="#5d9cd8"/><path d="M1051,416V425M1051,416L1060,421" stroke="#5d9cd8"/>
<circle cx="1055" cy="443" r="5" fill="none" stroke="#4f8cc8" stroke-width="1.500"/><circle cx="1055" cy="443" r="2" fill="#7eb5e8"/>
<path d="M1050,469l8,-7" stroke="#4f8cc8" stroke-width="4"/><circle cx="1054" cy="467" r="2" fill="#222"/><circle cx="1058" cy="464" r="1.500" fill="#bbb"/>
<path d="M1050,485h10l-5,9z" fill="none" stroke="#2fc078" stroke-width="1.700"/>
<rect x="1045" y="503" width="22" height="21" rx="3" fill="#3d3d3d"/>
<circle cx="1055" cy="513" r="5.500" fill="#e8a0a0"/><path d="M1055,507.500a5.500,5.500 0 0 1 5.500,5.500h-5.500zM1055,513h-5.500a5.500,5.500 0 0 0 5.500,5.500z" fill="#b03030"/>
<rect x="1050" y="537" width="11" height="11" fill="#a84242"/><path d="M1050,540h3M1056,537v3M1053,543h3M1059,543h2M1050,546h3M1056,546v2" stroke="#3a1818" stroke-width="2"/>

<!-- mouse cursor -->
<path d="M1099.500,479V492L1102.500,489.500L1105,495L1107,494L1104.500,488.500L1108.500,488.500Z" fill="#fff" stroke="#111" stroke-width=".8"/>

<!-- timeline -->
<rect x="0" y="673" width="1041" height="4" fill="#1d1d1d"/>
<rect x="0" y="677" width="1041" height="19" fill="#303030"/>
<rect x="0" y="695" width="1041" height="25" fill="#1e1e1e"/>
<circle cx="14" cy="685" r="5" fill="#e6e6e6"/><path d="M17,682l-3,3l3,3z" fill="#303030"/><path d="M22,684l2.500,2.500l2.500,-2.500" class="i"/>
<rect x="36" y="678" width="57" height="16" rx="3" fill="#2a2a2a"/>
<rect x="94" y="678" width="50" height="16" rx="3" fill="#2a2a2a"/>
<text x="41" y="689">Playback</text><path d="M85,684l2.500,2.500l2.500,-2.500" class="i"/>
<text x="100" y="689">Keying</text><path d="M136,684l2.500,2.500l2.500,-2.500" class="i"/>
<text x="152" y="689">View</text><text x="185" y="689">Marker</text>
<rect x="443" y="678" width="16" height="16" rx="2" fill="#545454"/><circle cx="450" cy="685.500" r="3.500" fill="#e6e6e6"/>
<rect x="459" y="678" width="13" height="16" rx="2" fill="#353535"/><path d="M463,684l2.500,2.500l2.500,-2.500" fill="none" stroke="#555"/>
<rect x="480" y="678" width="99" height="16" rx="3" fill="#545454"/>
<g fill="#e6e6e6">
<rect x="483" y="681" width="1.800" height="9"/><path d="M491,681v9l-6,-4.500z"/>
<path d="M500,685.500l3.500,-3.500l3.500,3.500l-3.500,3.500zM513,681v9l-6,-4.500z" transform="translate(-2,0)"/>
<path d="M525,681v9l-7,-4.500z"/>
<path d="M533,680v11l8,-5.500z"/>
<path d="M548,681v9l6,-4.500zM554,685.500l3.500,-3.500l3.500,3.500l-3.500,3.500z"/>
<path d="M567,681v9l6,-4.500z"/><rect x="574" y="681" width="1.800" height="9"/>
</g>
<rect x="808" y="678" width="61" height="16" rx="3" fill="#545454"/>
<text class="c" x="838" y="689">1</text>
<rect x="874" y="678" width="18" height="16" rx="3" fill="#3f3f3f"/><circle cx="882" cy="686.500" r="4.500" class="i"/><path d="M882,686.500v-3M880,680.500h4" class="i"/>
<rect x="890" y="678" width="74" height="16" fill="#545454"/><rect x="965" y="678" width="70" height="16" rx="3" fill="#545454"/>
<text x="902" y="689">Start</text><text x="947" y="689">1</text>
<text x="977" y="689">End</text><text x="1008" y="689">250</text>

<!-- ruler -->
<rect x="27" y="698" width="19" height="14" rx="3" fill="#4772b3"/>
<rect x="5" y="711" width="1031" height="6" rx="3" fill="#4e4e4e"/>
<circle cx="8" cy="714" r="2.200" fill="none" stroke="#777"/><circle cx="1031" cy="714" r="2.200" fill="none" stroke="#777"/>
<text class="c w" x="36" y="709">1</text>
<text class="c" x="71.500" y="709">10</text><text class="c" x="110" y="709">20</text><text class="c" x="149" y="709">30</text><text class="c" x="187.500" y="709">40</text><text class="c" x="226" y="709">50</text><text class="c" x="265" y="709">60</text><text class="c" x="304" y="709">70</text><text class="c" x="343" y="709">80</text><text class="c" x="381.500" y="709">90</text><text class="c" x="420" y="709">100</text><text class="c" x="459" y="709">110</text><text class="c" x="498" y="709">120</text><text class="c" x="537" y="709">130</text><text class="c" x="575.500" y="709">140</text><text class="c" x="614.500" y="709">150</text><text class="c" x="653.500" y="709">160</text><text class="c" x="692" y="709">170</text><text class="c" x="731" y="709">180</text><text class="c" x="769.500" y="709">190</text><text class="c" x="808.500" y="709">200</text><text class="c" x="847" y="709">210</text><text class="c" x="886" y="709">220</text><text class="c" x="925" y="709">230</text><text class="c" x="964" y="709">240</text><text class="c" x="1003" y="709">250</text>
</svg>
</body></html>
